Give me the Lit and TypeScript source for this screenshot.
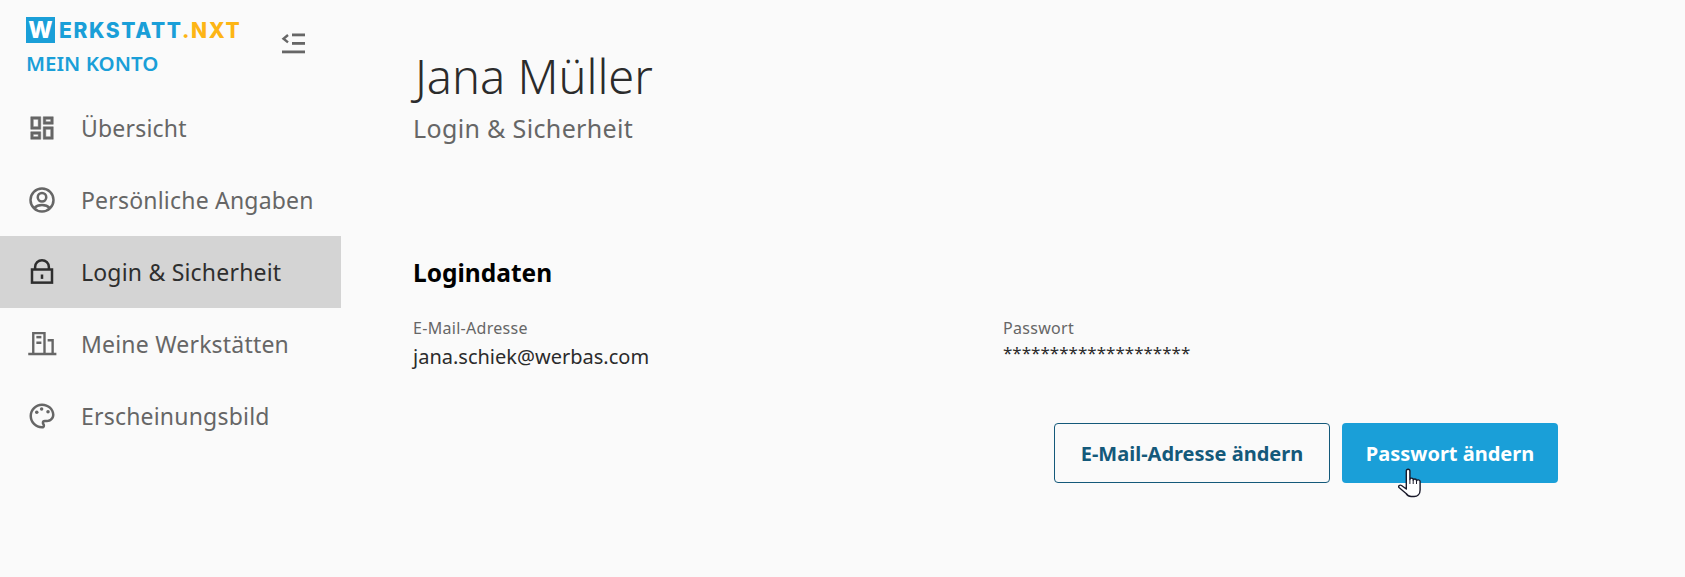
import { LitElement, html, css, svg } from 'lit';
import { customElement } from 'lit/decorators.js';

const icons: Record<string, unknown> = {
  dashboard: svg`<path d="M19 5v2h-4V5h4M9 5v6H5V5h4m10 8v6h-4v-6h4M9 17v2H5v-2h4M21 3h-8v6h8V3zM11 3H3v10h8V3zm10 8h-8v10h8V11zm-10 4H3v6h8v-6z" stroke="currentColor" stroke-width="0.4"/>`,
  person: svg`<circle cx="12" cy="12" r="9.200" fill="none" stroke="currentColor" stroke-width="2"/><circle cx="12" cy="9.800" r="3.400" fill="none" stroke="currentColor" stroke-width="2"/><path d="M5.600 18.500C7.200 16.900 9.400 16 12 16s4.800.9 6.400 2.500" fill="none" stroke="currentColor" stroke-width="2"/>`,
  lock: svg`<rect x="4" y="10" width="16" height="10.500" fill="none" stroke="currentColor" stroke-width="2"/><path d="M6.500 10V8a5.500 5.500 0 0 1 11 0v2" fill="none" stroke="currentColor" stroke-width="2"/><rect x="11" y="14" width="2" height="3.500"/>`,
  building: svg`<path d="M5 20V3.300h9V20" fill="none" stroke="currentColor" stroke-width="1.900"/><path d="M16.500 9h4v11" fill="none" stroke="currentColor" stroke-width="1.900"/><rect x="7.500" y="5.500" width="4" height="2"/><rect x="7.500" y="10" width="4" height="2"/><rect x="1" y="19" width="22.500" height="2"/>`,
  palette: svg`<path d="M12 22C6.490 22 2 17.510 2 12S6.490 2 12 2s10 4.040 10 9c0 3.310-2.690 6-6 6h-1.770c-.280 0-.500.220-.500.500 0 .120.050.230.130.330.410.470.640 1.060.640 1.670A2.500 2.500 0 0 1 12 22zm0-18c-4.410 0-8 3.590-8 8s3.590 8 8 8c.280 0 .500-.220.500-.500a.540.540 0 0 0-.140-.350c-.410-.460-.630-1.050-.630-1.650a2.500 2.500 0 0 1 2.500-2.500H16c2.210 0 4-1.790 4-4 0-3.860-3.590-7-8-7z"/><circle cx="7.800" cy="9" r="1.400"/><circle cx="11.700" cy="6.400" r="1.400"/><circle cx="16.800" cy="8.500" r="1.400"/>`,
};

const nav = [
  { icon: 'dashboard', label: 'Übersicht' },
  { icon: 'person', label: 'Persönliche Angaben' },
  { icon: 'lock', label: 'Login & Sicherheit', active: true },
  { icon: 'building', label: 'Meine Werkstätten' },
  { icon: 'palette', label: 'Erscheinungsbild' },
];

@customElement('app-root')
export class AppRoot extends LitElement {
  render() {
    return html`
      <aside class="sidebar">
        <header class="brand">
          <div>
            <div class="logo">
              <span class="logo-w">W</span><span class="logo-text">ERKSTATT<span class="logo-nxt">.NXT</span></span>
            </div>
            <div class="account">MEIN KONTO</div>
          </div>
          <svg class="collapse" viewBox="0 0 24 22" width="24" height="22" fill="#666">
            <rect x="11" y="1.500" width="13" height="2.800"/>
            <rect x="11" y="10" width="13" height="2.800"/>
            <rect x="1" y="18.500" width="23" height="2.800"/>
            <path d="M7 3 2.500 6.700 7 10.400" fill="none" stroke="#666" stroke-width="2.400"/>
          </svg>
        </header>
        <nav>
          ${nav.map(
            (item) => html`
              <a class="item ${item.active ? 'active' : ''}">
                <svg viewBox="0 0 24 24" width="30" height="30" fill="currentColor">${icons[item.icon]}</svg>
                <span>${item.label}</span>
              </a>
            `,
          )}
        </nav>
      </aside>
      <main>
        <h1>Jana Müller</h1>
        <p class="subtitle">Login &amp; Sicherheit</p>
        <h2>Logindaten</h2>
        <div class="fields">
          <div>
            <div class="label">E-Mail-Adresse</div>
            <div class="value">jana.schiek@werbas.com</div>
          </div>
          <div>
            <div class="label">Passwort</div>
            <div class="value secret">********************</div>
          </div>
        </div>
        <div class="actions">
          <button class="outline">E-Mail-Adresse ändern</button>
          <button class="primary">Passwort ändern</button>
          <svg class="cursor" viewBox="0 0 25 32" width="25" height="32">
            <path d="M8.300 3c0-2.400 3.600-2.400 3.600 0v8.500c0-1.800 3.300-1.800 3.300 0v.8c0-1.800 3.300-1.800 3.300 0v.8c0-1.800 3.600-1.500 3.600.5v8.400c0 4-2.500 6.500-6 6.500h-3c-2.500 0-4-1.500-5-3L1 19.500c-1-1.500.8-3 2.500-2l4.800 3.500z" fill="#fff" stroke="#1a1a2a" stroke-width="1.400" stroke-linejoin="round"/>
            <path d="M11.900 11.500V16M15.200 12.300V16M18.500 13.100V16" stroke="#1a1a2a" stroke-width="1" fill="none"/>
          </svg>
        </div>
      </main>
    `;
  }

  static styles = css`
    :host {
      display: flex;
      min-height: 577px;
      background: #fafafa;
      font-family: 'Noto Sans', 'Open Sans', sans-serif;
      color: #2b2b2b;
    }
    .sidebar {
      width: 341px;
      flex: none;
    }
    .brand {
      display: flex;
      justify-content: space-between;
      align-items: flex-start;
      padding: 17px 36px 0 26px;
      height: 75px;
    }
    .logo {
      display: flex;
      align-items: center;
      height: 26px;
      font-family: 'Inter', 'Liberation Sans', sans-serif;
      font-weight: 800;
      font-size: 21px;
      color: #1a9fd8;
    }
    .logo-w {
      width: 29px;
      height: 26px;
      margin-right: 4px;
      background: #1a9fd8;
      color: #fff;
      font-size: 23px;
      line-height: 26px;
      text-align: center;
    }
    .logo-text {
      letter-spacing: 1.6px;
    }
    .logo-nxt {
      color: #fdb515;
    }
    .account {
      margin-top: 7px;
      font-size: 20.500px;
      line-height: 26px;
      font-weight: 600;
      color: #1a9fd8;
    }
    .collapse {
      margin-top: 15px;
    }
    .item {
      display: flex;
      align-items: center;
      gap: 24px;
      height: 72px;
      padding-left: 27px;
      font-size: 23px;
      letter-spacing: 0.2px;
      color: #666;
    }
    .item.active {
      background: #d4d4d4;
      color: #2e2e2e;
    }
    main {
      flex: 1;
      padding: 44px 0 0 72px;
    }
    h1 {
      margin: 0 0 0 2px;
      font-size: 47px;
      font-weight: 300;
      line-height: 64px;
      color: #2b2b2b;
    }
    .subtitle {
      margin: 3px 0 0;
      font-size: 25px;
      letter-spacing: 0.35px;
      line-height: 34px;
      color: #666;
    }
    h2 {
      margin: 111px 0 0;
      font-size: 24.500px;
      line-height: 34px;
      font-weight: 700;
      color: #000;
    }
    .fields {
      display: grid;
      grid-template-columns: 590px 1fr;
      margin-top: 28px;
    }
    .label {
      font-size: 16px;
      letter-spacing: 0.3px;
      line-height: 20px;
      color: #666;
    }
    .value {
      margin-top: 6px;
      font-size: 20px;
      line-height: 26px;
      color: #2b2b2b;
    }
    .secret {
      margin-top: 2px;
      font-size: 17px;
    }
    .actions {
      position: relative;
      display: flex;
      justify-content: flex-end;
      gap: 12px;
      margin-top: 53px;
      padding-right: 127px;
    }
    button {
      height: 60px;
      border-radius: 4px;
      font: 700 20px 'Noto Sans', sans-serif;
    }
    .outline {
      width: 276px;
      background: transparent;
      border: 1px solid #14597a;
      color: #14597a;
    }
    .primary {
      width: 216px;
      background: #1a9fd8;
      border: 0;
      color: #fff;
    }
    .cursor {
      position: absolute;
      right: 262px;
      top: 45px;
    }
  `;
}
